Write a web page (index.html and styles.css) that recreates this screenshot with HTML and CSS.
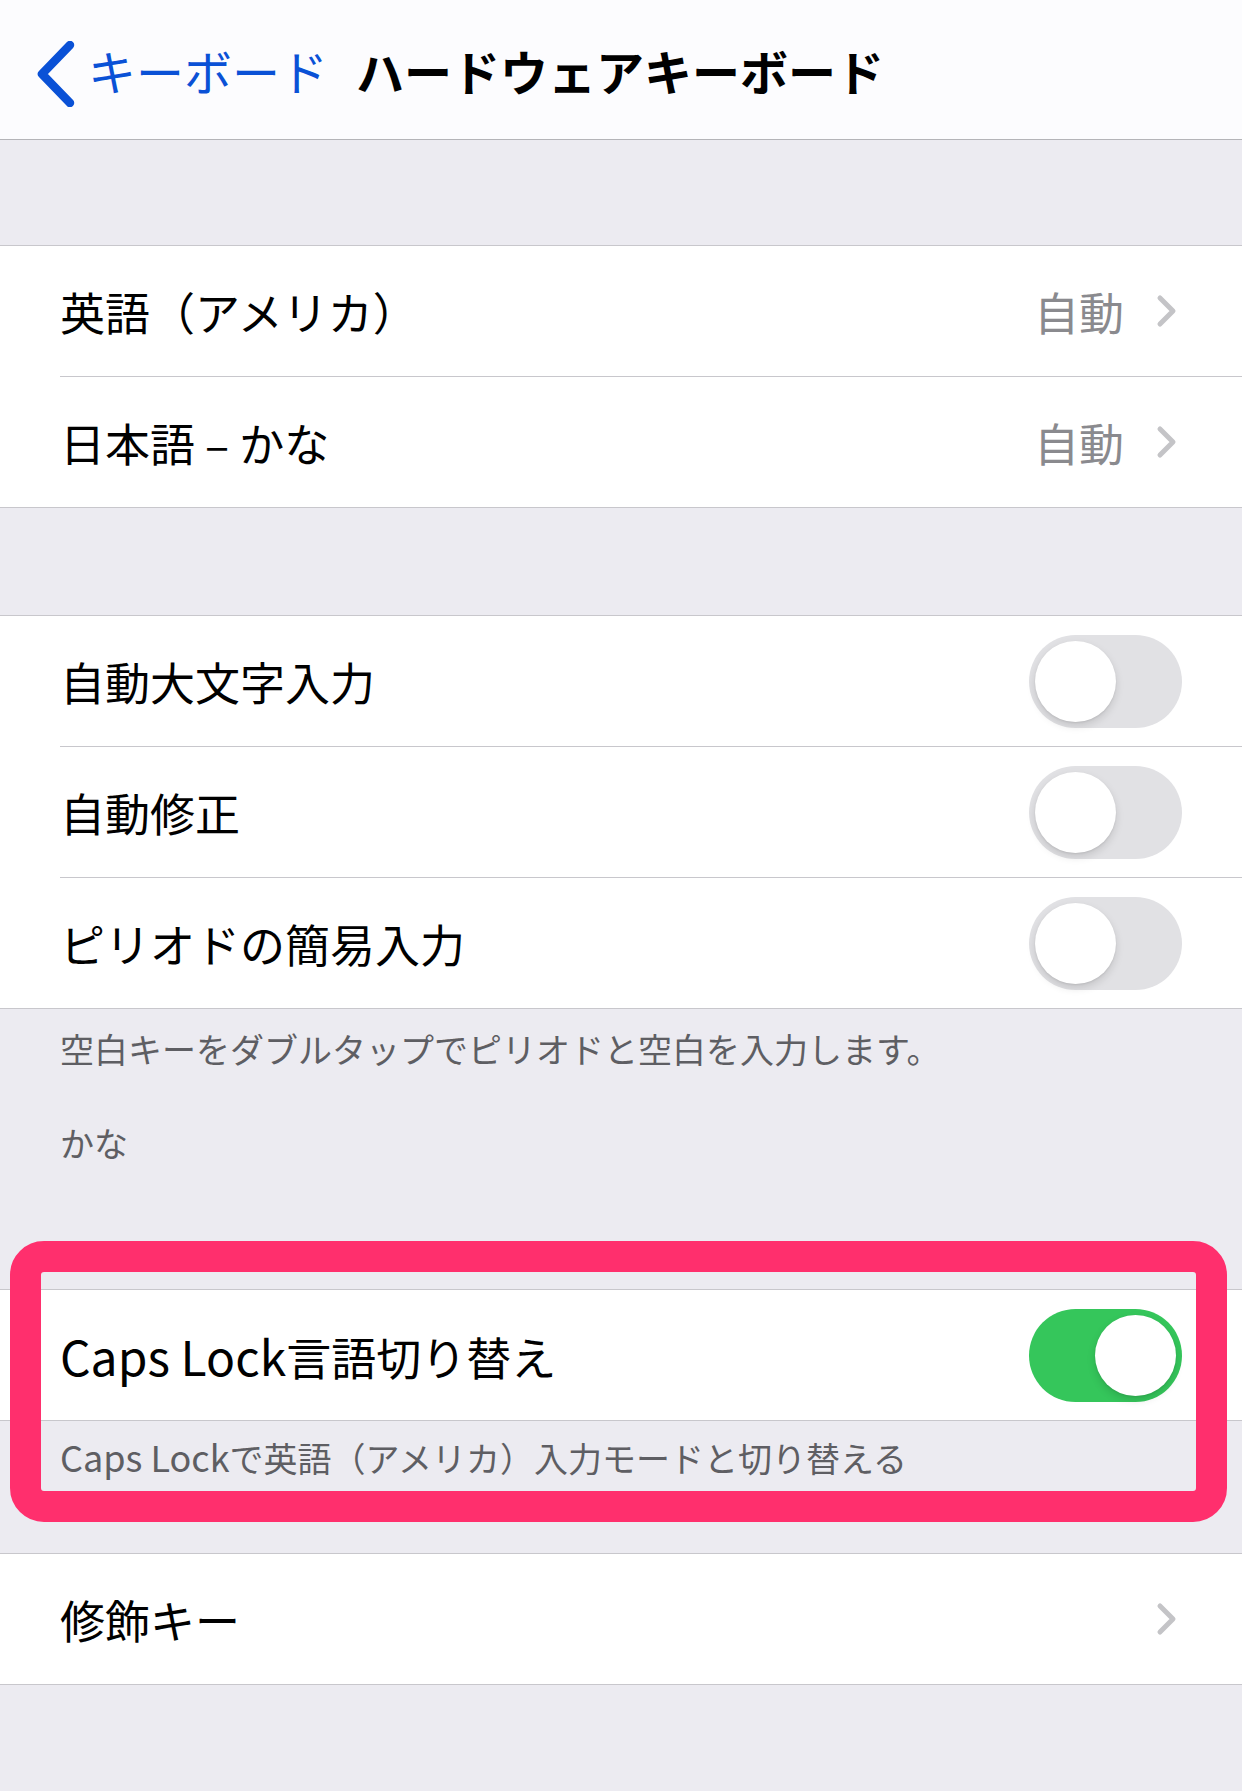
FILE: index.html
```html
<!DOCTYPE html>
<html lang="ja">
<head>
<meta charset="utf-8">
<title>ハードウェアキーボード</title>
<link rel="stylesheet" href="styles.css">
</head>
<body>
<div class="page">
  <header class="nav">
    <svg class="back-chevron" width="44" height="66" viewBox="0 0 44 66"><path d="M36 4 L8 33 L36 62" fill="none" stroke="#0a51d6" stroke-width="8.5" stroke-linecap="round" stroke-linejoin="round"/></svg>
    <span class="back-label">キーボード</span>
    <span class="nav-title">ハードウェアキーボード</span>
  </header>

  <div class="gap gap-a"></div>

  <section class="group">
    <div class="row">
      <span class="label">英語（アメリカ）</span>
      <span class="value">自動</span>
      <svg class="chev" width="22" height="34" viewBox="0 0 22 34"><path d="M4 4 L17 17 L4 30" fill="none" stroke="#c4c4c7" stroke-width="5" stroke-linecap="round" stroke-linejoin="round"/></svg>
    </div>
    <div class="row">
      <span class="label">日本語 – かな</span>
      <span class="value">自動</span>
      <svg class="chev" width="22" height="34" viewBox="0 0 22 34"><path d="M4 4 L17 17 L4 30" fill="none" stroke="#c4c4c7" stroke-width="5" stroke-linecap="round" stroke-linejoin="round"/></svg>
    </div>
  </section>

  <div class="gap gap-b"></div>

  <section class="group">
    <div class="row">
      <span class="label">自動大文字入力</span>
      <span class="toggle off"><span class="knob"></span></span>
    </div>
    <div class="row">
      <span class="label">自動修正</span>
      <span class="toggle off"><span class="knob"></span></span>
    </div>
    <div class="row">
      <span class="label">ピリオドの簡易入力</span>
      <span class="toggle off"><span class="knob"></span></span>
    </div>
  </section>

  <p class="footer">空白キーをダブルタップでピリオドと空白を入力します。</p>
  <p class="header-kana">かな</p>

  <section class="group group-caps">
    <div class="row">
      <span class="label"><span class="latin">Caps Lock</span>言語切り替え</span>
      <span class="toggle on"><span class="knob"></span></span>
    </div>
  </section>
  <p class="footer footer-caps"><span class="latin-sm">Caps Lock</span>で英語（アメリカ）入力モードと切り替える</p>

  <section class="group group-mod">
    <div class="row">
      <span class="label">修飾キー</span>
      <svg class="chev" width="22" height="34" viewBox="0 0 22 34"><path d="M4 4 L17 17 L4 30" fill="none" stroke="#c4c4c7" stroke-width="5" stroke-linecap="round" stroke-linejoin="round"/></svg>
    </div>
  </section>

  <div class="highlight"></div>
</div>
</body>
</html>
```

FILE: styles.css
```css
html, body {
  margin: 0;
  padding: 0;
}
body {
  background: #ecebf1;
  font-family: "Noto Sans CJK JP", "Noto Sans", sans-serif;
  color: #000;
}
.page {
  position: relative;
  width: 1242px;
  min-height: 1791px;
  overflow: hidden;
}
.nav {
  height: 139px;
  background: #fcfcfe;
  border-bottom: 1px solid #b4b4b8;
  display: flex;
  align-items: center;
  box-sizing: content-box;
}
.back-chevron {
  margin-left: 34px;
  margin-top: 8px;
  flex: none;
}
.back-label {
  margin-left: 10px;
  font-size: 48px;
  color: #0a51d6;
  line-height: 1;
}
.nav-title {
  margin-left: 28px;
  font-size: 48px;
  font-weight: 700;
  line-height: 1;
}
.gap-a { height: 105px; }
.gap-b { height: 107px; }
.group {
  background: #fff;
  border-top: 1px solid #c8c7cc;
  border-bottom: 1px solid #c8c7cc;
}
.row {
  height: 130px;
  display: flex;
  align-items: center;
  padding-left: 60px;
  padding-right: 60px;
}
.row + .row {
  border-top: 1px solid #c8c7cc;
  margin-left: 60px;
  padding-left: 0;
}
.label {
  flex: 1;
  font-size: 45px;
  line-height: 1;
}
.latin {
  font-size: 48px;
}
.latin-sm {
  font-size: 36px;
}
.value {
  font-size: 45px;
  color: #8a8a8e;
  line-height: 1;
  margin-right: 32px;
}
.chev {
  margin-right: 4px;
  flex: none;
}
.toggle {
  width: 153px;
  height: 93px;
  border-radius: 47px;
  display: flex;
  align-items: center;
  padding: 0 6px;
  box-sizing: border-box;
  flex: none;
}
.toggle.off {
  background: #e1e1e4;
  justify-content: flex-start;
}
.toggle.on {
  background: #35c65b;
  justify-content: flex-end;
}
.knob {
  width: 81px;
  height: 81px;
  border-radius: 50%;
  background: #fff;
  box-shadow: 0 4px 8px rgba(0,0,0,0.13), 0 1px 2px rgba(0,0,0,0.08);
}
.footer {
  margin: 0;
  padding: 20px 60px 0;
  font-size: 34px;
  line-height: 40px;
  color: #5e5e63;
}
.footer-caps {
  padding-top: 15px;
}
.header-kana {
  margin: 54px 0 0;
  padding: 0 60px;
  font-size: 34px;
  line-height: 40px;
  color: #5e5e63;
}
.group-caps {
  margin-top: 126px;
}
.group-mod {
  margin-top: 75px;
}
.highlight {
  position: absolute;
  left: 10px;
  top: 1241px;
  width: 1217px;
  height: 281px;
  box-sizing: border-box;
  border: 31px solid #ff2f6d;
  border-radius: 34px;
}
```
